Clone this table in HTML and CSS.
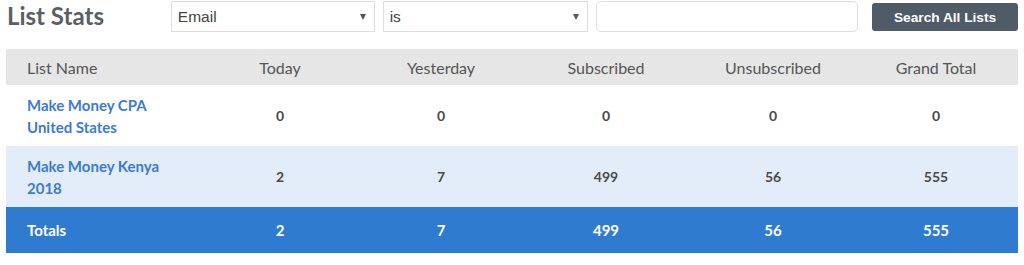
FILE: index.html
```html
<!DOCTYPE html>
<html>
<head>
<meta charset="utf-8">
<link rel="stylesheet" href="styles.css">
</head>
<body>
<div class="page">
  <div class="toolbar">
    <h1 class="title">List Stats</h1>
    <div class="select select-field"><span>Email</span><i class="caret"></i></div>
    <div class="select select-op"><span>is</span><i class="caret"></i></div>
    <div class="text-input"></div>
    <button class="btn">Search All Lists</button>
  </div>
  <table class="stats">
    <colgroup>
      <col class="c1"><col class="c2"><col class="c3"><col class="c4"><col class="c5"><col class="c6">
    </colgroup>
    <thead>
      <tr>
        <th class="name">List Name</th>
        <th>Today</th>
        <th>Yesterday</th>
        <th>Subscribed</th>
        <th>Unsubscribed</th>
        <th>Grand Total</th>
      </tr>
    </thead>
    <tbody>
      <tr class="row">
        <td class="name"><a href="#">Make Money CPA<br>United States</a></td>
        <td>0</td><td>0</td><td>0</td><td>0</td><td>0</td>
      </tr>
      <tr class="row alt">
        <td class="name"><a href="#">Make Money Kenya<br>2018</a></td>
        <td>2</td><td>7</td><td>499</td><td>56</td><td>555</td>
      </tr>
      <tr class="totals">
        <td class="name">Totals</td>
        <td>2</td><td>7</td><td>499</td><td>56</td><td>555</td>
      </tr>
    </tbody>
  </table>
</div>
</body>
</html>
```
FILE: styles.css
```css
html, body { margin: 0; padding: 0; background: #fff; }
.page { padding: 0 6px; font-family: "Lato", "Noto Sans", sans-serif; }
.toolbar { display: flex; align-items: flex-start; height: 49px; }
.title {
  margin: 2px 0 0 1px; width: 164px;
  font-size: 24px; font-weight: 700; color: #5a5f63; line-height: 28px;
}
.select {
  box-sizing: border-box; height: 31px; margin-top: 1px;
  border: 1px solid #dcdcdc; background: #fff;
  display: flex; align-items: center; justify-content: space-between;
  padding: 0 8px 0 6px;
  font-family: "Liberation Sans", Arial, sans-serif; font-size: 15.5px; color: #444;
}
.select-field { width: 204px; }
.select-op { width: 206px; margin-left: 8px; }
.caret {
  width: 0; height: 0;
  border-left: 3.5px solid transparent; border-right: 3.5px solid transparent;
  border-top: 6px solid #555;
}
.text-input {
  box-sizing: border-box; width: 262px; height: 31px; margin: 1px 0 0 8px;
  border: 1px solid #dedede; border-radius: 5px; background: #fff;
}
.btn {
  box-sizing: border-box; width: 146px; height: 28px; margin: 3px 0 0 14px;
  border: 0; border-radius: 3px; background: #4f5b66; color: #fff;
  font-family: "Liberation Sans", Arial, sans-serif; font-size: 13.7px; font-weight: 700;
  padding: 0;
}
.stats { width: 1012px; border-collapse: collapse; table-layout: fixed; }
.c1 { width: 192px; }
.c2 { width: 164px; }
.c3 { width: 158px; }
.c4 { width: 172px; }
.c5 { width: 162px; }
.c6 { width: 164px; }
.stats th, .stats td { text-align: center; padding: 0; }
.stats thead tr { background: #e6e6e6; height: 36px; }
.stats th { font-weight: 400; font-size: 16px; color: #555; }
.stats .name { text-align: left; padding-left: 21px; }
.row { height: 61px; background: #fff; }
.row.alt { background: #e3edf9; }
.row td { font-size: 14px; font-weight: 700; color: #4a4a4a; }
.row a { color: #3b7bd4; text-decoration: none; font-size: 15px; line-height: 22px; font-weight: 700; }
.totals { height: 46px; background: #2f7bcf; }
.totals td { color: #fff; font-size: 15px; font-weight: 700; }
```
